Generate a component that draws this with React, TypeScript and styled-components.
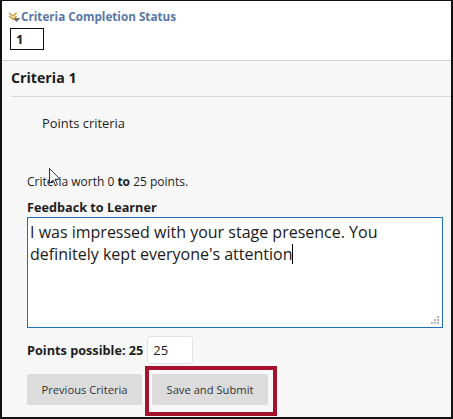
import { createGlobalStyle } from 'styled-components';
import styled from 'styled-components';

const GlobalStyle = createGlobalStyle`
  html, body {
    margin: 0;
    padding: 0;
    background: #fff;
  }
  body {
    font-family: 'Open Sans', 'Liberation Sans', sans-serif;
    color: #222;
  }
`;

const Frame = styled.div`
  position: relative;
  width: 453px;
  height: 419px;
  box-sizing: border-box;
  border-style: solid;
  border-color: #111;
  border-width: 1px 2px 2px 2px;
  background: #f7f7f7;
  overflow: hidden;
`;

const StatusBar = styled.div`
  background: #fff;
  padding: 7px 0 10px 5px;
  border-bottom: 1px solid #cfcfcf;
`;

const StatusTitle = styled.div`
  display: flex;
  align-items: center;
  height: 16px;
  font-size: 11.7px;
  font-weight: 700;
  color: #5877a6;
`;

const Chevron = styled.svg`
  width: 14px;
  height: 13px;
  margin-top: 3px;
`;

const StatusBox = styled.div`
  width: 34px;
  height: 22px;
  box-sizing: border-box;
  margin: 4px 0 0 3px;
  border: 1px solid #111;
  font-size: 13px;
  font-weight: 700;
  line-height: 20px;
  padding-left: 5px;
  color: #222;
`;

const CriteriaHead = styled.div`
  margin-left: 9px;
  padding: 7px 0 8px;
  border-bottom: 1px solid #d8d8d8;
  font-size: 14.2px;
  font-weight: 700;
  line-height: 20px;
  color: #1a1a1a;
`;

const Body = styled.div`
  padding-left: 25px;
`;

const Text = styled.div<{ $indent?: number; $top: number; $bold?: boolean; $size?: number }>`
  margin-top: ${p => p.$top}px;
  padding-left: ${p => p.$indent ?? 0}px;
  font-size: ${p => p.$size ?? 12}px;
  line-height: 18px;
  font-weight: ${p => (p.$bold ? 700 : 400)};
  color: #1d1d1d;
  white-space: nowrap;
`;

const FeedbackBox = styled.div`
  position: relative;
  width: 416px;
  height: 111px;
  box-sizing: border-box;
  margin-top: 1px;
  border: 1px solid #1f70c1;
  background: #fff;
  padding: 3px 2px;
  font-size: 16px;
  line-height: 22px;
  color: #1a1a1a;
`;

const Caret = styled.span`
  display: inline-block;
  width: 1px;
  height: 20px;
  background: #000;
  vertical-align: -4px;
`;

const Grip = styled.svg`
  position: absolute;
  right: 2px;
  bottom: 2px;
  width: 9px;
  height: 9px;
`;

const PointsRow = styled.div`
  display: flex;
  align-items: center;
  gap: 4px;
  margin-top: 8px;
  font-size: 12.7px;
  font-weight: 700;
  color: #1d1d1d;
`;

const PointsInput = styled.div`
  width: 46px;
  height: 28px;
  box-sizing: border-box;
  border: 1px solid #e2e2e2;
  border-radius: 3px;
  background: #fff;
  font-size: 13px;
  font-weight: 400;
  line-height: 26px;
  padding-left: 5px;
`;

const ButtonRow = styled.div`
  display: flex;
  align-items: flex-start;
  gap: 3px;
  margin-top: 2px;
`;

const Button = styled.button<{ $width: number }>`
  width: ${p => p.$width}px;
  height: 31px;
  border: none;
  border-radius: 2px;
  background: #dcdcdc;
  color: #333;
  font-family: 'Open Sans', 'Liberation Sans', sans-serif;
  font-size: 11.2px;
  padding: 0;
`;

const Highlight = styled.div`
  border: 4px solid #a5122d;
  padding: 4px 5px 7px 3px;
`;

const Pointer = styled.svg`
  position: absolute;
  left: 47px;
  top: 167px;
  width: 13px;
  height: 19px;
`;

export default function App() {
  return (
    <>
      <GlobalStyle />
      <Frame>
        <StatusBar>
          <StatusTitle>
            <Chevron viewBox="0 0 14 13">
              <path d="M5.5 7 L9.5 11 L13.5 7 Z" fill="#6b6b6b" />
              <path d="M2 1.8 L5.8 5 L9.6 1.8" stroke="#c9a23a" strokeWidth="1.6" fill="none" />
              <path d="M2 5 L5.8 8.2 L9.6 5" stroke="#c9a23a" strokeWidth="1.6" fill="none" />
            </Chevron>
            Criteria Completion Status
          </StatusTitle>
          <StatusBox>1</StatusBox>
        </StatusBar>
        <CriteriaHead>Criteria 1</CriteriaHead>
        <Body>
          <Text $top={17} $indent={15} $size={12.9}>Points criteria</Text>
          <Text $top={41} $indent={0}>
            Criteria worth 0 <b>to</b> 25 points.
          </Text>
          <Text $top={7} $bold $size={12.7}>Feedback to Learner</Text>
          <FeedbackBox>
            I was impressed with your stage presence. You definitely kept everyone's attention
            <Caret />
            <Grip viewBox="0 0 9 9">
              <rect x="6" y="0" width="2" height="2" fill="#b5b5b5" />
              <rect x="3" y="3" width="2" height="2" fill="#b5b5b5" />
              <rect x="6" y="3" width="2" height="2" fill="#b5b5b5" />
              <rect x="0" y="6" width="2" height="2" fill="#b5b5b5" />
              <rect x="3" y="6" width="2" height="2" fill="#b5b5b5" />
              <rect x="6" y="6" width="2" height="2" fill="#b5b5b5" />
            </Grip>
          </FeedbackBox>
          <PointsRow>
            Points possible: 25
            <PointsInput>25</PointsInput>
          </PointsRow>
          <ButtonRow>
            <Button $width={115} style={{ marginTop: 8 }}>Previous Criteria</Button>
            <Highlight>
              <Button $width={116}>Save and Submit</Button>
            </Highlight>
          </ButtonRow>
        </Body>
        <Pointer viewBox="0 0 13 19">
          <path
            d="M0.5 0.5 L0.5 15.5 L4 12 L6.5 17.5 L8.5 16.6 L6 11.2 L11 11.2 Z"
            fill="#fff"
            stroke="#333"
            strokeWidth="1"
            strokeLinejoin="round"
          />
        </Pointer>
      </Frame>
    </>
  );
}
